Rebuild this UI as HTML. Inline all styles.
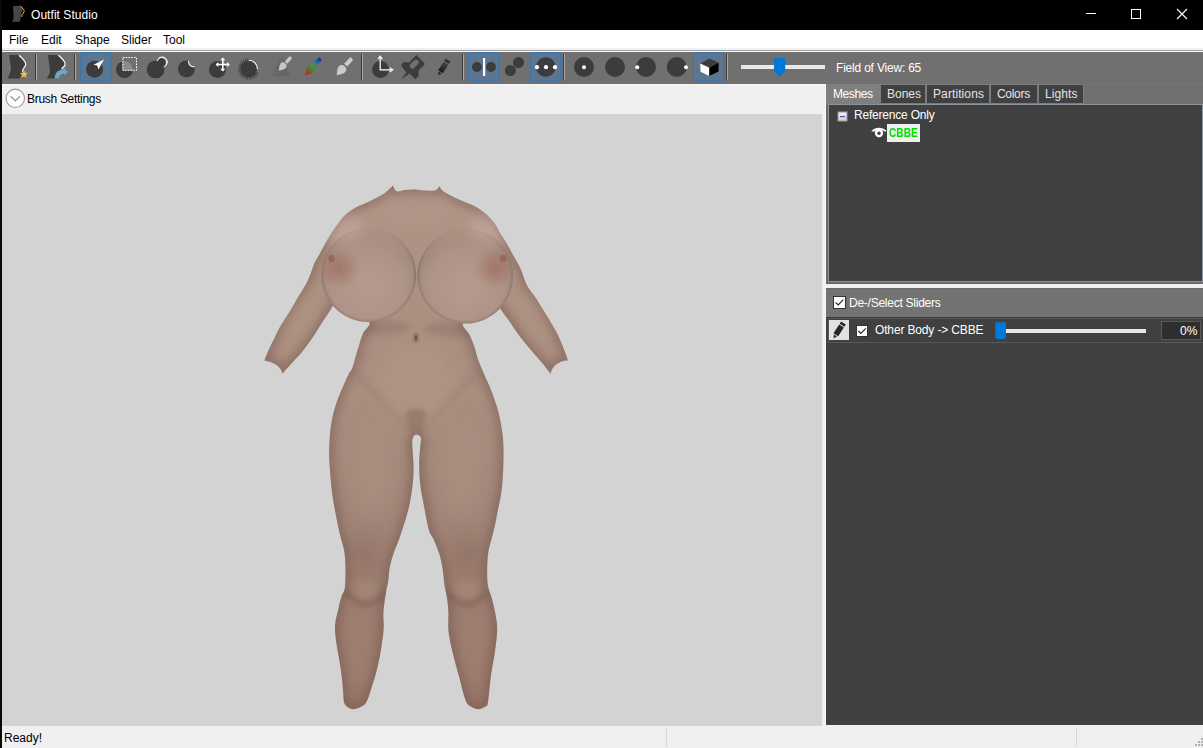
<!DOCTYPE html>
<html><head><meta charset="utf-8">
<style>
*{box-sizing:border-box}
html,body{margin:0;padding:0}
body{width:1203px;height:748px;overflow:hidden;position:relative;background:#f0f0f0;font-family:"Liberation Sans",sans-serif;font-size:12px;line-height:14px}
.a{position:absolute}
.t{position:absolute;white-space:nowrap;line-height:14px}
</style></head><body>
<!-- title bar -->
<div class="a" style="left:0;top:0;width:1203px;height:30px;background:#000"></div>
<div class="t" style="left:31px;top:7.5px;color:#fff;letter-spacing:0.05px">Outfit Studio</div>
<svg class="a" style="left:1080px;top:0" width="123" height="30" viewBox="1080 0 123 30">
<rect x="1086" y="13" width="10" height="1" fill="#fff"/>
<rect x="1131.5" y="9.5" width="9" height="9" fill="none" stroke="#fff" stroke-width="1"/>
<path d="M1177,9 L1187,19 M1187,9 L1177,19" stroke="#fff" stroke-width="1.1"/>
</svg>
<svg class="a" style="left:10px;top:4px" width="18" height="20" viewBox="10 4 18 20">
<path d="M13,6 L20.5,6 L22.8,8.6 L21,14.5 L20,21.8 L12,21.8 L13.5,19 L13.5,13.8 L13,6Z" fill="#474747"/>
<path d="M20.3,6 L21.8,7.2 L24.3,10.8 L23.2,13.5 L22,14.8 L21.6,17" fill="none" stroke="#f0b429" stroke-width="1"/>
</svg>
<!-- menu -->
<div class="a" style="left:2px;top:30px;width:1201px;height:18px;background:#fff"></div>
<div class="a" style="left:2px;top:48px;width:1201px;height:2px;background:#f0f0f0"></div>
<div class="a" style="left:2px;top:50px;width:1201px;height:1px;background:#a0a0a0"></div>
<div class="a" style="left:2px;top:51px;width:1201px;height:1px;background:#fdfdfd"></div>
<div class="t" style="left:9px;top:32.6px;color:#000">File</div>
<div class="t" style="left:41px;top:32.6px;color:#000">Edit</div>
<div class="t" style="left:75px;top:32.6px;color:#000">Shape</div>
<div class="t" style="left:121px;top:32.6px;color:#000">Slider</div>
<div class="t" style="left:163px;top:32.6px;color:#000">Tool</div>
<!-- toolbar -->
<div class="a" style="left:2px;top:52px;width:1201px;height:32px;background:#707070"></div>
<!-- toolbar icons -->
<svg class="a" style="left:0;top:0" width="1203" height="84" viewBox="0 0 1203 84">
<g fill="#3c3c3c">
<path d="M9.2,55 L18.8,55 C21,57 26,61 26.4,64.5 C26.4,67 22.8,68.5 22.4,71.5 L20,78.5 L7.4,78.5 C9,76 11,72 11,67 C10.5,63 9.3,60 9.2,55Z"/>
<path d="M48.1,55 L58.3,55 C61,57.5 65.8,61 65.8,64 C65.6,66.5 62,67.5 61.5,68.6 L59,78.6 L46.7,78.6 C48.5,76 50.3,73 50,70 C49.5,65 48.2,60 48.1,55Z"/>
</g>
<path d="M19,55.2 C21,57 25.6,61 25.8,64.2 C25.9,67 22.5,68 22.4,71.8" fill="none" stroke="#fff" stroke-width="1.2"/>
<path d="M58.4,55.2 C60.5,57 65.2,61 65.2,64.2 C65.3,66.5 62.5,67.5 61.6,68.8" fill="none" stroke="#fff" stroke-width="1.2"/>
<path d="M24,69.9 L25.2,72.7 L28.2,72.9 L25.9,74.8 L26.6,77.8 L24,76.2 L21.4,77.8 L22.1,74.8 L19.8,72.9 L22.8,72.7Z" fill="#f0bd45"/>
<path d="M54.6,78.6 C54.8,73 58,69.5 63.2,69.4 L63.3,67.6 L67.6,71.7 L64.6,75.7 L64.4,73.6 C61.5,73.8 59.4,75 59.2,78.6Z" fill="#69a8c8"/>
<!-- separators -->
<g>
<rect x="35" y="54" width="1" height="26" fill="#3a3a3a"/><rect x="36" y="54" width="1" height="26" fill="#aaaaaa"/>
<rect x="74" y="54" width="1" height="26" fill="#3a3a3a"/><rect x="75" y="54" width="1" height="26" fill="#aaaaaa"/>
<rect x="361" y="54" width="1" height="26" fill="#3a3a3a"/><rect x="362" y="54" width="1" height="26" fill="#aaaaaa"/>
<rect x="462" y="54" width="1" height="26" fill="#3a3a3a"/><rect x="463" y="54" width="1" height="26" fill="#aaaaaa"/>
<rect x="563" y="54" width="1" height="26" fill="#3a3a3a"/><rect x="564" y="54" width="1" height="26" fill="#aaaaaa"/>
<rect x="726" y="54" width="1" height="26" fill="#3a3a3a"/><rect x="727" y="54" width="1" height="26" fill="#aaaaaa"/>
</g>
<!-- selected buttons -->
<g fill="#5b7690" stroke="#3f74a8" stroke-width="1">
<rect x="80.5" y="52.5" width="30" height="28"/>
<rect x="468.5" y="52.5" width="30" height="28"/>
<rect x="530.5" y="52.5" width="30" height="28"/>
<rect x="693.5" y="52.5" width="30" height="28"/>
</g>
<!-- brush tool circles -->
<g fill="#3c3c3c">
<circle cx="94.6" cy="69.3" r="8.5"/>
<circle cx="124.5" cy="69.5" r="8.6"/>
<circle cx="155.6" cy="69.5" r="8.7"/>
<circle cx="186.4" cy="69" r="8.5"/>
<circle cx="217.5" cy="69.5" r="8.5"/>
<circle cx="380.5" cy="69.5" r="8.5"/>
</g>
<!-- select pointer -->
<path d="M104,59.5 L93.5,64.8 L97.2,65.6 L98.4,69.6Z" fill="#fff"/>
<!-- mask select -->
<path d="M124.5,60.9 A8.6,8.6 0 0 1 133.1,69.5 L133.1,70.7 L122.4,70.7 L122.4,61.1 Z" fill="#8c8c8c"/>
<rect x="122.9" y="57.5" width="13.6" height="12.8" fill="none" stroke="#fff" stroke-width="1" stroke-dasharray="1.6,1.2"/>
<!-- inflate -->
<circle cx="162.3" cy="62" r="5" fill="#3c3c3c" stroke="#fff" stroke-width="1"/>
<circle cx="155.6" cy="69.5" r="8.7" fill="#3c3c3c"/>
<path d="M158.2,58.6 A5,5 0 1 1 164.6,66.6" fill="none" stroke="#fff" stroke-width="1"/>
<!-- deflate -->
<defs><clipPath id="dfc"><circle cx="186.4" cy="69" r="8.6"/></clipPath></defs>
<circle cx="193.8" cy="61.6" r="5.2" fill="#707070"/>
<g clip-path="url(#dfc)"><circle cx="193.8" cy="61.6" r="5.2" fill="none" stroke="#fff" stroke-width="1.1"/></g>
<!-- move arrows -->
<g stroke="#fff" stroke-width="1.6" fill="#fff">
<line x1="222.8" y1="58.5" x2="222.8" y2="70.5"/><line x1="216.5" y1="64.5" x2="229" y2="64.5"/>
</g>
<g fill="#fff">
<path d="M222.8,57.6 L220.3,60.2 L225.3,60.2Z"/><path d="M222.8,71.4 L220.3,68.8 L225.3,68.8Z"/>
<path d="M215.7,64.5 L218.3,62 L218.3,67Z"/><path d="M229.8,64.5 L227.2,62 L227.2,67Z"/>
</g>
<!-- smooth spiky -->
<circle cx="248.8" cy="69" r="8.2" fill="#3c3c3c"/>
<g stroke="#3c3c3c" stroke-width="1.1" stroke-linecap="round"><line x1="248.1" y1="61.5" x2="247.9" y2="58.7"/><line x1="246.4" y1="61.9" x2="245.4" y2="59.3"/><line x1="244.7" y1="62.7" x2="243.2" y2="60.4"/><line x1="243.3" y1="63.9" x2="241.3" y2="62.0"/><line x1="242.2" y1="65.4" x2="239.8" y2="64.0"/><line x1="241.6" y1="67.1" x2="238.9" y2="66.3"/><line x1="241.3" y1="68.9" x2="238.5" y2="68.8"/><line x1="241.5" y1="70.7" x2="238.8" y2="71.3"/><line x1="242.1" y1="72.4" x2="239.6" y2="73.7"/><line x1="243.1" y1="73.9" x2="241.0" y2="75.8"/><line x1="244.5" y1="75.1" x2="242.9" y2="77.4"/><line x1="246.1" y1="76.0" x2="245.1" y2="78.6"/><line x1="247.9" y1="76.4" x2="247.5" y2="79.2"/><line x1="249.7" y1="76.4" x2="250.1" y2="79.2"/><line x1="251.5" y1="76.0" x2="252.5" y2="78.6"/><line x1="253.1" y1="75.1" x2="254.7" y2="77.4"/><line x1="254.5" y1="73.9" x2="256.6" y2="75.8"/><line x1="255.5" y1="72.4" x2="258.0" y2="73.7"/></g>
<path d="M248.8,60.3 A8.7,8.7 0 0 1 257.5,69" fill="none" stroke="#fff" stroke-width="1.1"/>
<!-- weight paint disabled -->
<path d="M276.5,64.5 L286.5,64.5 L290.2,76.6 L272,76.6Z" fill="#676767"/>
<circle cx="281.2" cy="61.6" r="2.9" fill="none" stroke="#676767" stroke-width="1.4"/>
<g transform="translate(278.8,70.6) rotate(42) scale(0.8)"><path d="M0,0 C-1.2,-2.5 -4.3,-5 -4.3,-8.2 C-4.3,-10.8 -2.4,-12.2 0,-12.2 C2.4,-12.2 4.3,-10.8 4.3,-8.2 C4.3,-5 1.5,-2.5 0,0Z M-2.1,-13.6 L2.1,-13.6 L2.1,-21.5 C2.1,-23.4 -2.1,-23.4 -2.1,-21.5Z" fill="#c8c8c8"/></g>
<!-- color brush -->
<defs><linearGradient id="cb" gradientUnits="userSpaceOnUse" x1="0" y1="0" x2="0" y2="-23"><stop offset="0" stop-color="#c02828"/><stop offset="0.2" stop-color="#a04030"/><stop offset="0.45" stop-color="#28a028"/><stop offset="0.62" stop-color="#30a040"/><stop offset="0.8" stop-color="#2060a0"/><stop offset="1" stop-color="#2020b0"/></linearGradient></defs>
<g transform="translate(305.2,75.3) rotate(42)"><path d="M0,0 C-1.2,-2.5 -4.3,-5 -4.3,-8.2 C-4.3,-10.8 -2.4,-12.2 0,-12.2 C2.4,-12.2 4.3,-10.8 4.3,-8.2 C4.3,-5 1.5,-2.5 0,0Z M-2.1,-13.6 L2.1,-13.6 L2.1,-21.5 C2.1,-23.4 -2.1,-23.4 -2.1,-21.5Z" fill="url(#cb)"/></g>
<!-- light brush -->
<g transform="translate(336.6,75.3) rotate(42)"><path d="M0,0 C-1.2,-2.5 -4.3,-5 -4.3,-8.2 C-4.3,-10.8 -2.4,-12.2 0,-12.2 C2.4,-12.2 4.3,-10.8 4.3,-8.2 C4.3,-5 1.5,-2.5 0,0Z M-2.1,-13.6 L2.1,-13.6 L2.1,-21.5 C2.1,-23.4 -2.1,-23.4 -2.1,-21.5Z" fill="#cacaca"/></g>
<!-- transform axes -->
<path d="M380.2,57 L380.2,69.8 L392,69.8" fill="none" stroke="#fff" stroke-width="1.2"/>
<path d="M378,59.2 L380.2,56.2 L382.4,59.2 M389.6,67.6 L392.8,69.8 L389.6,72" fill="none" stroke="#fff" stroke-width="1.1"/>
<!-- pin -->
<path d="M416.4,55 L425,63.9 L418.6,70.4 L418.5,76.6 L415.2,79.2 L409.6,73.6 L406.8,75.6 L401.2,79.4 L405.2,73.8 L406.4,72.4 L401,65.4 L403.4,62.2 L409.4,62.2 Z" fill="#3c3c3c"/>
<rect x="-5.2" y="-2.7" width="10.4" height="5.4" rx="2.5" transform="translate(414.3,64.1) rotate(-45)" fill="#707070"/>
<!-- pencil -->
<defs><linearGradient id="pg" x1="0" y1="0" x2="0" y2="1"><stop offset="0" stop-color="#4a4444"/><stop offset="1" stop-color="#241818"/></linearGradient></defs>
<g transform="translate(447.3,61.3) rotate(32.7)" fill="url(#pg)">
<rect x="-2.8" y="-1.6" width="5.6" height="2.8"/>
<rect x="-2.8" y="2.1" width="5.6" height="10.4"/>
<path d="M-1.9,13.2 L1.9,13.2 L0,16.6Z" fill="#2a2020"/>
</g>
<!-- mirror -->
<circle cx="476.9" cy="67" r="4.9" fill="#3c3c3c"/><circle cx="491" cy="67" r="4.9" fill="#3c3c3c"/>
<rect x="483" y="58" width="2.2" height="18" fill="#fff"/>
<!-- two circles -->
<circle cx="510.4" cy="70.5" r="5.5" fill="#3c3c3c"/><circle cx="518.5" cy="62.5" r="5.5" fill="#3c3c3c"/>
<!-- connected -->
<circle cx="545.8" cy="67" r="9.8" fill="#3c3c3c"/>
<circle cx="537" cy="67.2" r="2.1" fill="#fff"/><circle cx="546" cy="67.2" r="2.1" fill="#fff"/><circle cx="555" cy="67.2" r="2.1" fill="#fff"/>
<!-- view circles -->
<g fill="#3c3c3c"><circle cx="584" cy="67" r="10"/><circle cx="615" cy="67" r="10"/><circle cx="646" cy="67" r="10"/><circle cx="676.7" cy="67" r="10"/></g>
<g fill="#fff"><circle cx="584" cy="67.2" r="2"/><circle cx="637.3" cy="67.2" r="2"/><circle cx="686" cy="67.2" r="2"/></g>
<!-- cube -->
<path d="M700.2,63.5 L709.5,58.5 L718.7,62.8 L709.3,67.7Z" fill="#3c3c3c"/>
<path d="M700.2,63.5 L709.3,67.7 L709.3,76 L700.5,71.8Z" fill="#fff"/>
<path d="M709.3,67.7 L718.7,62.8 L718.5,71.5 L709.3,76Z" fill="#000"/>
<!-- fov slider -->
<rect x="741" y="65" width="84" height="4" fill="#e7eaea"/>
<path d="M775.2,58 L784,58 Q785.2,58 785.2,59.2 L785.2,71 L779.6,76.4 L774,71 L774,59.2 Q774,58 775.2,58Z" fill="#0078d7"/>
</svg>
<div class="t" style="left:836px;top:61.3px;color:#fff;letter-spacing:-0.2px">Field of View: 65</div>
<!-- brush settings -->
<div class="a" style="left:2px;top:84px;width:824px;height:1px;background:#f8f8f8"></div>
<svg class="a" style="left:5px;top:88px" width="21" height="21" viewBox="0 0 21 21">
<circle cx="10.3" cy="10.3" r="9.2" fill="#fff" stroke="#9a9a9a" stroke-width="1.1"/>
<path d="M5.6,8.3 L10.3,12.8 L15,8.3" fill="none" stroke="#9a9a9a" stroke-width="1.2"/>
</svg>
<div class="t" style="left:27px;top:92px;color:#000;letter-spacing:-0.3px">Brush Settings</div>
<!-- viewport -->
<div class="a" style="left:2px;top:114px;width:820px;height:612px;background:#d3d3d3"></div>
<div class="a" style="left:825px;top:84px;width:1px;height:642px;background:#fbfbfb"></div>
<!-- body -->
<svg class="a" style="left:0;top:0" width="1203" height="748" viewBox="0 0 1203 748">
<defs>
<clipPath id="brc"><ellipse cx="368.7" cy="275" rx="47.4" ry="47"/><ellipse cx="465.3" cy="276" rx="47.8" ry="47.5"/></clipPath>
<clipPath id="bc"><path d="M393.0,185.5 C391.6,186.8 388.3,190.6 384.5,193.2 C380.7,195.8 374.5,198.8 370.2,200.9 C365.9,203.1 362.3,204.2 358.6,206.1 C354.9,208.0 351.2,210.2 348.2,212.6 C345.2,215.0 342.8,217.6 340.4,220.4 C338.0,223.2 336.1,226.3 333.9,229.5 C331.7,232.7 329.5,236.1 327.4,239.8 C325.2,243.5 323.1,247.6 321.0,251.5 C318.9,255.4 316.1,259.8 314.5,263.2 C312.9,266.6 312.5,268.8 311.2,272.0 C309.9,275.2 308.9,278.7 306.8,282.7 C304.7,286.7 301.7,291.2 298.8,296.1 C295.9,301.0 292.5,307.0 289.4,312.1 C286.3,317.2 282.8,322.1 280.1,326.8 C277.4,331.5 275.4,336.2 273.4,340.2 C271.4,344.2 269.8,347.3 268.3,350.7 C266.8,354.1 265.0,359.0 264.3,360.6 C265.4,360.9 268.8,361.5 271.0,362.3 C273.2,363.1 275.7,364.4 277.4,365.7 C279.1,367.0 280.3,368.7 281.1,370.0 C281.9,371.3 282.0,373.1 282.2,373.7 C284.1,371.6 290.0,365.2 293.4,361.4 C296.8,357.6 299.4,355.1 302.8,350.9 C306.2,346.7 310.2,341.1 313.5,336.2 C316.8,331.3 319.9,326.0 322.8,321.5 C325.7,317.0 328.4,313.0 330.9,309.4 C333.4,305.8 334.0,298.6 338.0,300.0 C342.0,301.4 349.7,314.2 355.0,318.0 C360.3,321.8 368.3,320.2 369.6,322.8 C370.9,325.4 364.8,329.7 363.0,333.5 C361.2,337.3 360.3,341.3 359.0,345.5 C357.7,349.7 356.1,355.1 355.0,358.9 C353.9,362.6 353.4,365.4 352.3,368.0 C351.2,370.6 350.1,371.1 348.5,374.4 C346.9,377.7 344.4,383.3 342.5,387.7 C340.6,392.1 338.6,396.7 337.1,400.9 C335.6,405.1 334.4,409.0 333.4,413.0 C332.4,417.0 331.6,421.0 331.0,425.0 C330.4,429.0 330.1,432.8 329.8,437.0 C329.5,441.2 329.3,446.5 329.2,450.0 C329.1,453.5 329.0,453.7 329.2,458.0 C329.4,462.3 329.9,470.0 330.4,476.0 C330.9,482.0 331.4,488.0 332.2,494.0 C333.0,500.0 334.2,506.0 335.3,512.0 C336.4,518.0 337.9,525.4 338.9,530.0 C339.9,534.6 340.4,535.8 341.3,539.4 C342.2,543.0 343.6,546.9 344.3,551.5 C345.0,556.1 345.4,561.0 345.5,567.0 C345.6,573.0 345.6,582.6 344.9,587.6 C344.2,592.6 342.4,593.6 341.3,597.2 C340.2,600.8 339.3,604.6 338.3,609.2 C337.3,613.8 335.5,619.7 335.1,624.7 C334.7,629.7 335.3,634.0 335.9,639.4 C336.5,644.8 337.8,650.9 338.8,657.0 C339.8,663.1 341.0,670.1 341.7,676.0 C342.4,681.9 342.7,687.7 343.2,692.4 C343.7,697.1 343.1,701.2 344.7,704.0 C346.3,706.8 349.7,709.0 352.8,709.3 C355.9,709.6 360.7,707.2 363.1,705.6 C365.6,704.0 366.0,702.9 367.5,699.7 C369.0,696.5 370.4,691.1 371.9,686.5 C373.4,681.9 374.8,677.7 376.3,671.8 C377.8,665.9 379.5,658.3 380.7,651.2 C381.9,644.1 383.2,635.5 383.6,629.0 C384.1,622.5 383.0,617.9 383.4,612.0 C383.8,606.1 385.0,598.7 385.8,593.6 C386.6,588.5 387.6,585.6 388.2,581.6 C388.8,577.6 388.6,573.9 389.4,569.5 C390.2,565.1 391.4,560.0 393.0,555.0 C394.6,550.0 397.2,544.4 399.0,539.4 C400.8,534.4 402.6,528.7 403.8,525.0 C405.0,521.3 405.3,520.7 406.3,517.0 C407.3,513.3 408.8,508.4 409.9,502.6 C411.0,496.8 412.3,488.4 412.9,482.0 C413.5,475.6 413.6,470.2 413.5,464.0 C413.4,457.8 412.4,449.4 412.3,445.0 C412.2,440.6 412.3,439.2 413.0,437.5 C413.7,435.8 415.2,434.5 416.5,434.5 C417.8,434.5 420.2,435.8 420.8,437.5 C421.4,439.2 420.7,440.6 420.4,445.0 C420.1,449.4 419.2,457.2 419.2,464.0 C419.2,470.8 419.6,478.7 420.4,485.7 C421.2,492.7 422.6,498.6 424.0,506.0 C425.4,513.4 427.3,524.4 428.9,530.0 C430.5,535.6 431.9,535.2 433.7,539.4 C435.5,543.6 438.2,550.0 439.7,555.0 C441.2,560.0 441.9,564.5 442.7,569.5 C443.5,574.5 443.8,580.4 444.5,585.0 C445.2,589.6 446.2,592.5 446.9,597.0 C447.5,601.5 448.1,606.2 448.4,612.0 C448.7,617.8 447.8,625.0 448.6,632.0 C449.4,639.0 451.3,646.7 453.0,654.0 C454.7,661.3 456.9,668.7 458.9,676.0 C460.9,683.3 463.1,693.1 464.8,698.0 C466.5,702.9 467.0,703.7 469.2,705.6 C471.4,707.5 475.2,709.2 478.0,709.3 C480.8,709.4 484.5,707.2 486.1,706.3 C487.7,705.4 487.1,706.3 487.6,704.0 C488.1,701.7 488.5,697.6 489.1,692.4 C489.7,687.2 490.3,679.9 491.3,673.0 C492.3,666.1 494.0,658.3 495.0,651.0 C496.0,643.7 497.2,635.5 497.2,629.0 C497.2,622.5 496.0,617.3 495.0,612.0 C494.0,606.7 492.6,601.5 491.4,597.0 C490.2,592.5 488.5,590.0 487.8,585.0 C487.1,580.0 487.1,572.6 487.2,567.0 C487.3,561.4 487.7,556.1 488.4,551.5 C489.1,546.9 490.3,543.8 491.4,539.4 C492.5,535.0 494.0,529.6 495.0,525.0 C496.0,520.4 496.5,517.2 497.5,512.0 C498.5,506.8 500.2,500.0 501.1,494.0 C502.0,488.0 502.5,482.0 502.9,476.0 C503.3,470.0 503.4,462.3 503.5,458.0 C503.6,453.7 503.6,453.5 503.5,450.0 C503.4,446.5 503.3,441.2 502.9,437.0 C502.5,432.8 501.8,429.0 501.1,425.0 C500.4,421.0 499.7,417.0 498.7,413.0 C497.7,409.0 496.4,405.2 495.0,401.0 C493.6,396.8 492.0,392.1 490.2,387.7 C488.4,383.3 486.2,379.0 484.2,374.4 C482.2,369.8 479.8,364.4 478.2,360.0 C476.6,355.6 476.2,352.2 474.8,348.0 C473.4,343.8 471.5,338.8 469.5,334.8 C467.5,330.8 461.4,326.5 462.8,324.0 C464.2,321.5 472.6,323.7 478.0,320.0 C483.4,316.3 491.1,303.5 495.0,302.0 C498.9,300.5 499.2,307.6 501.6,310.8 C504.0,314.1 506.9,317.7 509.6,321.5 C512.3,325.3 514.7,329.5 517.6,333.5 C520.5,337.5 523.9,341.7 527.0,345.5 C530.1,349.3 533.5,353.0 536.3,356.2 C539.0,359.4 541.1,361.5 543.5,364.5 C545.9,367.5 549.4,372.4 550.6,374.0 C550.8,373.3 550.8,371.6 551.7,370.0 C552.6,368.4 554.2,366.1 556.0,364.6 C557.8,363.1 560.5,361.9 562.5,361.2 C564.5,360.5 567.2,360.7 568.2,360.6 C567.6,359.0 565.8,354.1 564.5,350.7 C563.2,347.3 561.8,343.5 560.2,340.0 C558.6,336.5 557.2,333.5 555.0,329.5 C552.8,325.5 550.1,321.1 547.0,316.0 C543.9,310.9 539.6,303.8 536.3,298.7 C533.0,293.6 529.7,290.5 527.0,285.4 C524.3,280.3 522.6,273.0 520.3,268.0 C518.0,263.0 515.5,259.4 513.3,255.4 C511.0,251.3 509.0,247.4 506.8,243.7 C504.6,240.0 502.3,236.6 500.3,233.4 C498.3,230.2 497.2,227.3 495.0,224.3 C492.8,221.3 490.3,218.0 487.3,215.2 C484.3,212.4 480.7,209.6 477.0,207.4 C473.3,205.2 469.0,203.8 465.3,202.2 C461.6,200.6 458.7,199.5 455.0,197.7 C451.3,195.9 445.8,193.1 443.2,191.2 C440.6,189.2 439.9,186.9 439.3,186.0 C438.7,186.7 438.1,189.5 435.5,190.3 C432.9,191.1 427.2,190.7 424.0,190.6 C420.8,190.5 419.2,189.6 416.0,189.5 C412.8,189.4 408.2,189.7 405.0,190.0 C401.8,190.3 398.5,191.9 396.5,191.2 C394.5,190.4 393.6,186.4 393.0,185.5 Z"/></clipPath>
<filter id="bl6" x="-20%" y="-20%" width="140%" height="140%"><feGaussianBlur stdDeviation="4"/></filter>
<filter id="bl3" x="-50%" y="-50%" width="200%" height="200%"><feGaussianBlur stdDeviation="2.5"/></filter>
<filter id="bl1" x="-50%" y="-50%" width="200%" height="200%"><feGaussianBlur stdDeviation="1.2"/></filter>
<filter id="bl10" x="-50%" y="-50%" width="200%" height="200%"><feGaussianBlur stdDeviation="9"/></filter>
<linearGradient id="skin" gradientUnits="userSpaceOnUse" x1="0" y1="185" x2="0" y2="710">
<stop offset="0" stop-color="#b09486"/><stop offset="0.45" stop-color="#a88c7e"/><stop offset="0.75" stop-color="#9d7f72"/><stop offset="1" stop-color="#987769"/>
</linearGradient>
<linearGradient id="brfade" gradientUnits="userSpaceOnUse" x1="0" y1="228" x2="0" y2="262"><stop offset="0" stop-color="#fff" stop-opacity="0"/><stop offset="1" stop-color="#fff" stop-opacity="1"/></linearGradient>
<mask id="brm" maskUnits="userSpaceOnUse" x="250" y="180" width="330" height="200"><rect x="250" y="180" width="330" height="200" fill="url(#brfade)"/></mask>
<radialGradient id="brl" cx="0.5" cy="0.62" r="0.55"><stop offset="0" stop-color="#b69c90"/><stop offset="0.7" stop-color="#ae9488"/><stop offset="1" stop-color="#a0887c"/></radialGradient>
<radialGradient id="areo" cx="0.5" cy="0.5" r="0.5"><stop offset="0" stop-color="#9c6a5c" stop-opacity="0.7"/><stop offset="0.55" stop-color="#a07062" stop-opacity="0.4"/><stop offset="1" stop-color="#a87a6c" stop-opacity="0"/></radialGradient>
</defs>
<g clip-path="url(#bc)">
<rect x="250" y="180" width="330" height="535" fill="url(#skin)"/>
<path d="M393.0,185.5 C391.6,186.8 388.3,190.6 384.5,193.2 C380.7,195.8 374.5,198.8 370.2,200.9 C365.9,203.1 362.3,204.2 358.6,206.1 C354.9,208.0 351.2,210.2 348.2,212.6 C345.2,215.0 342.8,217.6 340.4,220.4 C338.0,223.2 336.1,226.3 333.9,229.5 C331.7,232.7 329.5,236.1 327.4,239.8 C325.2,243.5 323.1,247.6 321.0,251.5 C318.9,255.4 316.1,259.8 314.5,263.2 C312.9,266.6 312.5,268.8 311.2,272.0 C309.9,275.2 308.9,278.7 306.8,282.7 C304.7,286.7 301.7,291.2 298.8,296.1 C295.9,301.0 292.5,307.0 289.4,312.1 C286.3,317.2 282.8,322.1 280.1,326.8 C277.4,331.5 275.4,336.2 273.4,340.2 C271.4,344.2 269.8,347.3 268.3,350.7 C266.8,354.1 265.0,359.0 264.3,360.6 C265.4,360.9 268.8,361.5 271.0,362.3 C273.2,363.1 275.7,364.4 277.4,365.7 C279.1,367.0 280.3,368.7 281.1,370.0 C281.9,371.3 282.0,373.1 282.2,373.7 C284.1,371.6 290.0,365.2 293.4,361.4 C296.8,357.6 299.4,355.1 302.8,350.9 C306.2,346.7 310.2,341.1 313.5,336.2 C316.8,331.3 319.9,326.0 322.8,321.5 C325.7,317.0 328.4,313.0 330.9,309.4 C333.4,305.8 334.0,298.6 338.0,300.0 C342.0,301.4 349.7,314.2 355.0,318.0 C360.3,321.8 368.3,320.2 369.6,322.8 C370.9,325.4 364.8,329.7 363.0,333.5 C361.2,337.3 360.3,341.3 359.0,345.5 C357.7,349.7 356.1,355.1 355.0,358.9 C353.9,362.6 353.4,365.4 352.3,368.0 C351.2,370.6 350.1,371.1 348.5,374.4 C346.9,377.7 344.4,383.3 342.5,387.7 C340.6,392.1 338.6,396.7 337.1,400.9 C335.6,405.1 334.4,409.0 333.4,413.0 C332.4,417.0 331.6,421.0 331.0,425.0 C330.4,429.0 330.1,432.8 329.8,437.0 C329.5,441.2 329.3,446.5 329.2,450.0 C329.1,453.5 329.0,453.7 329.2,458.0 C329.4,462.3 329.9,470.0 330.4,476.0 C330.9,482.0 331.4,488.0 332.2,494.0 C333.0,500.0 334.2,506.0 335.3,512.0 C336.4,518.0 337.9,525.4 338.9,530.0 C339.9,534.6 340.4,535.8 341.3,539.4 C342.2,543.0 343.6,546.9 344.3,551.5 C345.0,556.1 345.4,561.0 345.5,567.0 C345.6,573.0 345.6,582.6 344.9,587.6 C344.2,592.6 342.4,593.6 341.3,597.2 C340.2,600.8 339.3,604.6 338.3,609.2 C337.3,613.8 335.5,619.7 335.1,624.7 C334.7,629.7 335.3,634.0 335.9,639.4 C336.5,644.8 337.8,650.9 338.8,657.0 C339.8,663.1 341.0,670.1 341.7,676.0 C342.4,681.9 342.7,687.7 343.2,692.4 C343.7,697.1 343.1,701.2 344.7,704.0 C346.3,706.8 349.7,709.0 352.8,709.3 C355.9,709.6 360.7,707.2 363.1,705.6 C365.6,704.0 366.0,702.9 367.5,699.7 C369.0,696.5 370.4,691.1 371.9,686.5 C373.4,681.9 374.8,677.7 376.3,671.8 C377.8,665.9 379.5,658.3 380.7,651.2 C381.9,644.1 383.2,635.5 383.6,629.0 C384.1,622.5 383.0,617.9 383.4,612.0 C383.8,606.1 385.0,598.7 385.8,593.6 C386.6,588.5 387.6,585.6 388.2,581.6 C388.8,577.6 388.6,573.9 389.4,569.5 C390.2,565.1 391.4,560.0 393.0,555.0 C394.6,550.0 397.2,544.4 399.0,539.4 C400.8,534.4 402.6,528.7 403.8,525.0 C405.0,521.3 405.3,520.7 406.3,517.0 C407.3,513.3 408.8,508.4 409.9,502.6 C411.0,496.8 412.3,488.4 412.9,482.0 C413.5,475.6 413.6,470.2 413.5,464.0 C413.4,457.8 412.4,449.4 412.3,445.0 C412.2,440.6 412.3,439.2 413.0,437.5 C413.7,435.8 415.2,434.5 416.5,434.5 C417.8,434.5 420.2,435.8 420.8,437.5 C421.4,439.2 420.7,440.6 420.4,445.0 C420.1,449.4 419.2,457.2 419.2,464.0 C419.2,470.8 419.6,478.7 420.4,485.7 C421.2,492.7 422.6,498.6 424.0,506.0 C425.4,513.4 427.3,524.4 428.9,530.0 C430.5,535.6 431.9,535.2 433.7,539.4 C435.5,543.6 438.2,550.0 439.7,555.0 C441.2,560.0 441.9,564.5 442.7,569.5 C443.5,574.5 443.8,580.4 444.5,585.0 C445.2,589.6 446.2,592.5 446.9,597.0 C447.5,601.5 448.1,606.2 448.4,612.0 C448.7,617.8 447.8,625.0 448.6,632.0 C449.4,639.0 451.3,646.7 453.0,654.0 C454.7,661.3 456.9,668.7 458.9,676.0 C460.9,683.3 463.1,693.1 464.8,698.0 C466.5,702.9 467.0,703.7 469.2,705.6 C471.4,707.5 475.2,709.2 478.0,709.3 C480.8,709.4 484.5,707.2 486.1,706.3 C487.7,705.4 487.1,706.3 487.6,704.0 C488.1,701.7 488.5,697.6 489.1,692.4 C489.7,687.2 490.3,679.9 491.3,673.0 C492.3,666.1 494.0,658.3 495.0,651.0 C496.0,643.7 497.2,635.5 497.2,629.0 C497.2,622.5 496.0,617.3 495.0,612.0 C494.0,606.7 492.6,601.5 491.4,597.0 C490.2,592.5 488.5,590.0 487.8,585.0 C487.1,580.0 487.1,572.6 487.2,567.0 C487.3,561.4 487.7,556.1 488.4,551.5 C489.1,546.9 490.3,543.8 491.4,539.4 C492.5,535.0 494.0,529.6 495.0,525.0 C496.0,520.4 496.5,517.2 497.5,512.0 C498.5,506.8 500.2,500.0 501.1,494.0 C502.0,488.0 502.5,482.0 502.9,476.0 C503.3,470.0 503.4,462.3 503.5,458.0 C503.6,453.7 503.6,453.5 503.5,450.0 C503.4,446.5 503.3,441.2 502.9,437.0 C502.5,432.8 501.8,429.0 501.1,425.0 C500.4,421.0 499.7,417.0 498.7,413.0 C497.7,409.0 496.4,405.2 495.0,401.0 C493.6,396.8 492.0,392.1 490.2,387.7 C488.4,383.3 486.2,379.0 484.2,374.4 C482.2,369.8 479.8,364.4 478.2,360.0 C476.6,355.6 476.2,352.2 474.8,348.0 C473.4,343.8 471.5,338.8 469.5,334.8 C467.5,330.8 461.4,326.5 462.8,324.0 C464.2,321.5 472.6,323.7 478.0,320.0 C483.4,316.3 491.1,303.5 495.0,302.0 C498.9,300.5 499.2,307.6 501.6,310.8 C504.0,314.1 506.9,317.7 509.6,321.5 C512.3,325.3 514.7,329.5 517.6,333.5 C520.5,337.5 523.9,341.7 527.0,345.5 C530.1,349.3 533.5,353.0 536.3,356.2 C539.0,359.4 541.1,361.5 543.5,364.5 C545.9,367.5 549.4,372.4 550.6,374.0 C550.8,373.3 550.8,371.6 551.7,370.0 C552.6,368.4 554.2,366.1 556.0,364.6 C557.8,363.1 560.5,361.9 562.5,361.2 C564.5,360.5 567.2,360.7 568.2,360.6 C567.6,359.0 565.8,354.1 564.5,350.7 C563.2,347.3 561.8,343.5 560.2,340.0 C558.6,336.5 557.2,333.5 555.0,329.5 C552.8,325.5 550.1,321.1 547.0,316.0 C543.9,310.9 539.6,303.8 536.3,298.7 C533.0,293.6 529.7,290.5 527.0,285.4 C524.3,280.3 522.6,273.0 520.3,268.0 C518.0,263.0 515.5,259.4 513.3,255.4 C511.0,251.3 509.0,247.4 506.8,243.7 C504.6,240.0 502.3,236.6 500.3,233.4 C498.3,230.2 497.2,227.3 495.0,224.3 C492.8,221.3 490.3,218.0 487.3,215.2 C484.3,212.4 480.7,209.6 477.0,207.4 C473.3,205.2 469.0,203.8 465.3,202.2 C461.6,200.6 458.7,199.5 455.0,197.7 C451.3,195.9 445.8,193.1 443.2,191.2 C440.6,189.2 439.9,186.9 439.3,186.0 C438.7,186.7 438.1,189.5 435.5,190.3 C432.9,191.1 427.2,190.7 424.0,190.6 C420.8,190.5 419.2,189.6 416.0,189.5 C412.8,189.4 408.2,189.7 405.0,190.0 C401.8,190.3 398.5,191.9 396.5,191.2 C394.5,190.4 393.6,186.4 393.0,185.5 Z" fill="none" stroke="#6a5045" stroke-width="9" filter="url(#bl6)" opacity="0.45"/>
<!-- highlights -->
<ellipse cx="345" cy="232" rx="14" ry="20" fill="#c2a99b" filter="url(#bl10)" opacity="0.9" transform="rotate(40 345 232)"/>
<ellipse cx="487" cy="232" rx="14" ry="20" fill="#c2a99b" filter="url(#bl10)" opacity="0.9" transform="rotate(-40 487 232)"/>
<ellipse cx="416" cy="214" rx="45" ry="14" fill="#b3978a" filter="url(#bl10)" opacity="0.6"/>
<ellipse cx="416" cy="385" rx="40" ry="45" fill="#b39787" filter="url(#bl10)" opacity="0.6"/>
<ellipse cx="372" cy="470" rx="22" ry="50" fill="#ad9183" filter="url(#bl10)" opacity="0.6"/>
<ellipse cx="462" cy="470" rx="22" ry="50" fill="#ad9183" filter="url(#bl10)" opacity="0.6"/>
<ellipse cx="365" cy="589" rx="11" ry="10" fill="#a58878" filter="url(#bl6)" opacity="0.8"/>
<ellipse cx="365" cy="555" rx="14" ry="18" fill="#7f6255" filter="url(#bl10)" opacity="0.35"/>
<ellipse cx="467" cy="589" rx="11" ry="10" fill="#a58878" filter="url(#bl6)" opacity="0.8"/>
<ellipse cx="467" cy="555" rx="14" ry="18" fill="#7f6255" filter="url(#bl10)" opacity="0.35"/>
<path d="M346,592 Q365,616 386,592" fill="none" stroke="#6e5346" stroke-width="5" filter="url(#bl3)" opacity="0.42"/>
<path d="M446,592 Q467,616 487,592" fill="none" stroke="#6e5346" stroke-width="5" filter="url(#bl3)" opacity="0.42"/>
<ellipse cx="358" cy="650" rx="9" ry="38" fill="#a48777" filter="url(#bl10)" opacity="0.5"/>
<ellipse cx="474" cy="650" rx="9" ry="38" fill="#a48777" filter="url(#bl10)" opacity="0.5"/>
<ellipse cx="300" cy="315" rx="9" ry="32" fill="#b09686" filter="url(#bl10)" opacity="0.6" transform="rotate(30 300 315)"/>
<ellipse cx="532" cy="315" rx="9" ry="32" fill="#b09686" filter="url(#bl10)" opacity="0.6" transform="rotate(-30 532 315)"/>
<!-- under-breast shadow -->
<ellipse cx="369" cy="327" rx="40" ry="8" fill="#7a5e52" filter="url(#bl3)" opacity="0.25"/>
<ellipse cx="465" cy="329" rx="40" ry="8" fill="#7a5e52" filter="url(#bl3)" opacity="0.25"/>
<!-- navel -->
<ellipse cx="416" cy="338" rx="3" ry="5" fill="#6e5044" filter="url(#bl1)" opacity="0.4"/>
<ellipse cx="416" cy="338" rx="1.3" ry="3" fill="#6a4a40" opacity="0.8"/>
<!-- pelvic tone -->
<path d="M405,412 Q416,406 427,412 L422,433 Q416,437 410,433 Z" fill="#83665a" filter="url(#bl3)" opacity="0.5"/>
<path d="M352,372 Q385,400 406,428" fill="none" stroke="#8a6c5e" stroke-width="5" filter="url(#bl3)" opacity="0.2"/>
<path d="M480,372 Q447,400 426,428" fill="none" stroke="#8a6c5e" stroke-width="5" filter="url(#bl3)" opacity="0.2"/>
</g>
<!-- breasts -->
<g mask="url(#brm)">
<ellipse cx="368.7" cy="275" rx="47.4" ry="47" fill="url(#brl)"/>
<ellipse cx="465.3" cy="276" rx="47.8" ry="47.5" fill="url(#brl)"/>
</g>
<g clip-path="url(#brc)"><g mask="url(#brm)"><ellipse cx="368.7" cy="275" rx="47.4" ry="47" fill="none" stroke="#6a5044" stroke-width="3" filter="url(#bl1)" opacity="0.35"/>
<ellipse cx="465.3" cy="276" rx="47.8" ry="47.5" fill="none" stroke="#6a5044" stroke-width="3" filter="url(#bl1)" opacity="0.35"/></g>
<circle cx="339" cy="268" r="22" fill="url(#areo)"/>
<circle cx="495" cy="268" r="22" fill="url(#areo)"/></g>
<ellipse cx="331.5" cy="258.5" rx="3.3" ry="3.8" fill="#9a6259" opacity="0.85"/>
<ellipse cx="503" cy="258.5" rx="3.3" ry="3.8" fill="#9a6259" opacity="0.85"/>
</svg>
<!-- /body -->
<!-- right panel -->
<div class="a" style="left:826px;top:84px;width:377px;height:20px;background:#707070"></div>
<div class="a" style="left:826px;top:84px;width:377px;height:1px;background:#777"></div>
<div class="a" style="left:826px;top:84px;width:55px;height:20px;background:#7f7f7f"></div>
<div class="a" style="left:880px;top:84px;width:204px;height:20px;background:#7c7c7c"></div>
<div class="a" style="left:881px;top:85px;width:44px;height:18px;background:#404040"></div>
<div class="a" style="left:927px;top:85px;width:62px;height:18px;background:#404040"></div>
<div class="a" style="left:991px;top:85px;width:46px;height:18px;background:#404040"></div>
<div class="a" style="left:1039px;top:85px;width:44px;height:18px;background:#404040"></div>
<div class="t" style="left:833px;top:86.8px;color:#fff;letter-spacing:-0.4px">Meshes</div>
<div class="t" style="left:887px;top:86.8px;color:#e4e4e4;letter-spacing:0px">Bones</div>
<div class="t" style="left:933px;top:86.8px;color:#e4e4e4;letter-spacing:0.1px">Partitions</div>
<div class="t" style="left:997px;top:86.8px;color:#e4e4e4;letter-spacing:-0.3px">Colors</div>
<div class="t" style="left:1045px;top:86.8px;color:#e4e4e4;letter-spacing:0.1px">Lights</div>
<div class="a" style="left:826px;top:104px;width:377px;height:180px;background:#6a6a6a"></div>
<div class="a" style="left:828px;top:104px;width:375px;height:178px;background:#8a929c"></div>
<div class="a" style="left:829px;top:105px;width:373px;height:176px;background:#404040"></div>
<svg class="a" style="left:837px;top:111px" width="11" height="11" viewBox="0 0 11 11">
<defs><linearGradient id="eg" x1="0" y1="0" x2="0" y2="1"><stop offset="0" stop-color="#f4f4f4"/><stop offset="1" stop-color="#d0d0d0"/></linearGradient></defs>
<rect x="1" y="1" width="9" height="9" fill="url(#eg)" stroke="#9a9a9a" stroke-width="1"/>
<rect x="3" y="5" width="5" height="1.2" fill="#3a55b0"/>
</svg>
<div class="t" style="left:854px;top:107.5px;color:#fff;letter-spacing:-0.2px">Reference Only</div>
<svg class="a" style="left:870px;top:125px" width="18" height="14" viewBox="0 0 18 14">
<path d="M1.2,6.5 C4,2 12,1.2 16.6,6 L15.2,6.8 C12.5,4.2 7,4 4.3,6.6 Z" fill="#fff"/>
<circle cx="9" cy="8" r="4.2" fill="#fff"/><circle cx="9" cy="8.3" r="1.7" fill="#404040"/>
</svg>
<div class="a" style="left:887px;top:124px;width:33px;height:18px;background:#efefef"></div>
<div class="t" style="left:888.5px;top:125.8px;color:#00e000;font-weight:bold;transform:scaleX(0.85);transform-origin:0 0;letter-spacing:0px">CBBE</div>
<div class="a" style="left:826px;top:284px;width:377px;height:4px;background:#f0f0f0"></div>
<div class="a" style="left:826px;top:288px;width:377px;height:29px;background:#737373"></div>
<div class="a" style="left:826px;top:288px;width:377px;height:1px;background:#6b6b6b"></div>
<svg class="a" style="left:832px;top:295px" width="15" height="15" viewBox="0 0 15 15">
<rect x="1.5" y="1.5" width="12" height="12" fill="#fff" stroke="#333" stroke-width="1"/>
<path d="M3.6,7.4 L6.2,10 L11.4,4.6" fill="none" stroke="#222" stroke-width="1.1"/>
</svg>
<div class="t" style="left:849px;top:296px;color:#fff;letter-spacing:-0.25px">De-/Select Sliders</div>
<div class="a" style="left:826px;top:317px;width:377px;height:408px;background:#404040"></div>
<div class="a" style="left:826px;top:317px;width:377px;height:1px;background:#3a3a3a"></div>
<div class="a" style="left:828px;top:318px;width:375px;height:1px;background:#585858"></div>
<div class="a" style="left:828px;top:342px;width:375px;height:1px;background:#585858"></div>
<div class="a" style="left:828px;top:318px;width:1px;height:25px;background:#585858"></div>
<div class="a" style="left:829px;top:320px;width:20px;height:20px;background:#e2e2e2"></div>
<svg class="a" style="left:829px;top:320px" width="20" height="20" viewBox="829 320 20 20">
<g transform="translate(842.6,324.3) rotate(32.7)" fill="#2a2424">
<rect x="-2.8" y="-1.6" width="5.6" height="2.8"/>
<rect x="-2.8" y="2.1" width="5.6" height="10.4"/>
<path d="M-1.9,13.2 L1.9,13.2 L0,16.6Z"/>
</g>
</svg>
<svg class="a" style="left:854px;top:323px" width="15" height="15" viewBox="0 0 15 15">
<rect x="2.5" y="2.5" width="11" height="11" fill="#fff" stroke="#333" stroke-width="1"/>
<path d="M4.3,8 L6.8,10.4 L11.8,5.4" fill="none" stroke="#222" stroke-width="1.1"/>
</svg>
<div class="t" style="left:875px;top:322.5px;color:#fff;letter-spacing:-0.15px">Other Body -&gt; CBBE</div>
<div class="a" style="left:1006px;top:329px;width:140px;height:4px;background:#e6e8e8"></div>
<svg class="a" style="left:994px;top:321px" width="14" height="20" viewBox="0 0 14 20">
<path d="M2.2,1.3 L11,1.3 Q12,1.3 12,2.3 L12,15.5 Q12,18 9,18 L4.8,18 Q1.2,18 1.2,15.5 L1.2,2.3 Q1.2,1.3 2.2,1.3Z" fill="#0078d7"/>
</svg>
<div class="a" style="left:1161px;top:321px;width:40px;height:19px;background:#5a5a5a"></div>
<div class="a" style="left:1162px;top:322px;width:38px;height:17px;background:#2e2e2e"></div>
<div class="t" style="left:1180px;top:323.7px;color:#fff;letter-spacing:0px">0%</div>
<!-- status bar -->
<div class="a" style="left:0;top:726px;width:1203px;height:22px;background:#f0f0f0"></div>
<div class="t" style="left:4px;top:730.5px;color:#000">Ready!</div>
<div class="a" style="left:666px;top:727px;width:1px;height:20px;background:#d7d7d7"></div>
<div class="a" style="left:1076px;top:727px;width:1px;height:20px;background:#d7d7d7"></div>
<svg class="a" style="left:1190px;top:735px" width="13" height="13" viewBox="1190 735 13 13">
<g fill="#b0b0b0"><rect x="1201" y="738" width="2" height="2"/><rect x="1198" y="741" width="2" height="2"/><rect x="1201" y="741" width="2" height="2"/><rect x="1195" y="744" width="2" height="2"/><rect x="1198" y="744" width="2" height="2"/><rect x="1201" y="744" width="2" height="2"/></g>
</svg>
<!-- left strip -->
<div class="a" style="left:0;top:0;width:2px;height:748px;background:#0a0a0a"></div>
</body></html>
